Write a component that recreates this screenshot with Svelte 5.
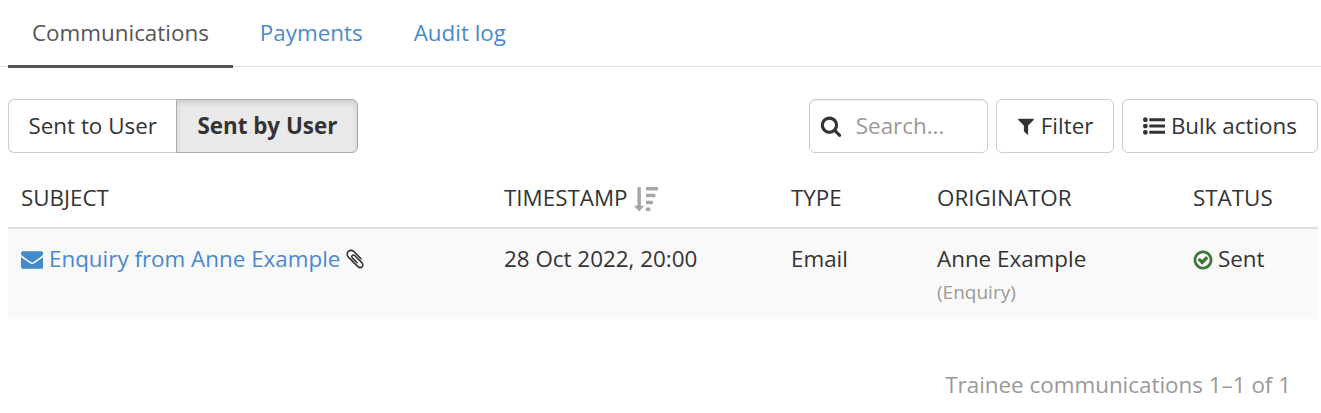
<script>
  const tabs = ['Communications', 'Payments', 'Audit log'];
  const columns = [
    { label: 'SUBJECT', width: 483 },
    { label: 'TIMESTAMP', width: 287, sorted: true },
    { label: 'TYPE', width: 146 },
    { label: 'ORIGINATOR', width: 256 },
    { label: 'STATUS', width: 138 }
  ];
</script>

<div class="page">
  <ul class="tabs">
    {#each tabs as tab, i}
      <li class:active={i === 0}>{tab}</li>
    {/each}
  </ul>

  <div class="content">
    <div class="toolbar">
      <div class="toggle">
        <button>Sent to User</button>
        <button class="on">Sent by User</button>
      </div>
      <div class="actions">
        <div class="search">
          <svg class="search-icon" viewBox="0 0 1792 1792"><path d="M1216 832q0-185-131.500-316.500t-316.500-131.500-316.500 131.500-131.500 316.500 131.500 316.500 316.500 131.500 316.500-131.500 131.500-316.500zm512 832q0 52-38 90t-90 38q-54 0-90-38l-343-342q-179 124-399 124-143 0-273.500-55.500t-225-150-150-225-55.500-273.500 55.500-273.500 150-225 225-150 273.500-55.500 273.500 55.500 225 150 150 225 55.500 273.500q0 220-124 399l343 343q37 37 37 90z"/></svg>
          <span>Search...</span>
        </div>
        <button class="filter">
          <svg viewBox="0 0 1792 1792"><path d="M1595 295q17 41-14 70l-493 493v742q0 42-39 59-13 5-25 5-27 0-45-19l-256-256q-19-19-19-45v-486l-493-493q-31-29-14-70 17-39 59-39h1280q42 0 59 39z"/></svg>Filter
        </button>
        <button class="bulk">
          <svg viewBox="0 0 1792 1792"><path d="M384 1408q0 80-56 136t-136 56-136-56-56-136 56-136 136-56 136 56 56 136zm0-512q0 80-56 136t-136 56-136-56-56-136 56-136 136-56 136 56 56 136zm1408 416v192q0 13-9.500 22.500t-22.500 9.500h-1216q-13 0-22.500-9.500t-9.500-22.500v-192q0-13 9.500-22.500t22.500-9.500h1216q13 0 22.500 9.500t9.500 22.500zm-1408-928q0 80-56 136t-136 56-136-56-56-136 56-136 136-56 136 56 56 136zm1408 416v192q0 13-9.500 22.500t-22.500 9.500h-1216q-13 0-22.500-9.500t-9.500-22.500v-192q0-13 9.500-22.500t22.500-9.500h1216q13 0 22.500 9.500t9.500 22.500zm0-512v192q0 13-9.500 22.500t-22.500 9.500h-1216q-13 0-22.500-9.500t-9.500-22.500v-192q0-13 9.500-22.500t22.500-9.500h1216q13 0 22.500 9.500t9.500 22.500z"/></svg>Bulk actions
        </button>
      </div>
    </div>

    <table>
      <thead>
        <tr>
          {#each columns as col}
            <th style="width: {col.width}px">
              {col.label}
              {#if col.sorted}
                <svg class="sort" viewBox="0 0 1792 1792"><path d="M1216 1568v192q0 14-9 23t-23 9h-256q-14 0-23-9t-9-23v-192q0-14 9-23t23-9h256q14 0 23 9t9 23zm-480-128q0 12-10 24l-319 319q-10 9-23 9-12 0-23-9l-320-320q-15-16-7-35 8-20 30-20h192v-1376q0-14 9-23t23-9h192q14 0 23 9t9 23v1376h192q14 0 23 9t9 23zm672-384v192q0 14-9 23t-23 9h-448q-14 0-23-9t-9-23v-192q0-14 9-23t23-9h448q14 0 23 9t9 23zm192-512v192q0 14-9 23t-23 9h-640q-14 0-23-9t-9-23v-192q0-14 9-23t23-9h640q14 0 23 9t9 23zm192-512v192q0 14-9 23t-23 9h-832q-14 0-23-9t-9-23v-192q0-14 9-23t23-9h832q14 0 23 9t9 23z"/></svg>
              {/if}
            </th>
          {/each}
        </tr>
      </thead>
      <tbody>
        <tr>
          <td>
            <svg class="mail" viewBox="0 0 1792 1792"><path d="M1792 710v794q0 66-47 113t-113 47h-1472q-66 0-113-47t-47-113v-794q44 49 101 87 362 246 497 345 57 42 92.500 65.500t94.500 48 110 24.500h2q51 0 110-24.500t94.500-48 92.500-65.500q170-123 498-345 57-39 100-87zm0-294q0 79-49 151t-122 123q-376 261-468 325-10 7-42.500 30.500t-54 38-52 32.500-57.500 27-50 9h-2q-23 0-50-9t-57.500-27-52-32.500-54-38-42.500-30.500q-91-64-262-182.500t-205-142.500q-62-42-117-115.500t-55-136.500q0-78 41.500-130t118.500-52h1472q65 0 112.500 47t47.500 113z"/></svg><span class="link">Enquiry from Anne Example</span><svg class="clip" viewBox="0 0 1792 1792"><path d="M1596 1385q0 117-79 196t-196 79q-135 0-235-100l-777-776q-113-115-113-271 0-159 110-270t269-111q158 0 273 113l605 606q10 10 10 22 0 16-30.500 46.500t-46.500 30.500q-13 0-23-10l-606-607q-79-77-181-77-106 0-179 75t-73 181q0 105 76 181l776 777q63 63 145 63 64 0 106-42t42-106q0-82-63-145l-581-581q-26-24-60-24-29 0-48 19t-19 48q0 32 25 59l410 410q10 10 10 22 0 16-31 47t-47 31q-12 0-22-10l-410-410q-63-61-63-149 0-82 57-139t139-57q88 0 149 63l581 581q100 98 100 235z"/></svg>
          </td>
          <td>28 Oct 2022, 20:00</td>
          <td>Email</td>
          <td>
            Anne Example
            <small>(Enquiry)</small>
          </td>
          <td>
            <svg class="ok" viewBox="0 0 1792 1792"><path d="M1299 813l-422 422q-19 19-45 19t-45-19l-294-294q-19-19-19-45t19-45l102-102q19-19 45-19t45 19l147 147 275-275q19-19 45-19t45 19l102 102q19 19 19 45t-19 45zm141 83q0-148-73-273t-198-198-273-73-273 73-198 198-73 273 73 273 198 198 273 73 273-73 198-198 73-273zm224 0q0 209-103 385.500t-279.500 279.500-385.500 103-385.500-103-279.500-279.500-103-385.500 103-385.500 279.500-279.500 385.500-103 385.500 103 279.500 279.500 103 385.500z"/></svg>Sent
          </td>
        </tr>
      </tbody>
    </table>

    <p class="count">Trainee communications 1–1 of 1</p>
  </div>
</div>

<style>
  :global(body) {
    background: #fff;
  }

  .page {
    font-family: "Open Sans", sans-serif;
    font-size: 22.4px;
    line-height: 32px;
    color: #333;
  }

  .tabs {
    display: flex;
    list-style: none;
    margin: 0;
    padding: 0 0 0 8px;
    height: 67px;
    box-sizing: border-box;
    border-bottom: 1px solid #ddd;
  }

  .tabs li {
    height: 68px;
    box-sizing: border-box;
    padding: 17px 24px 0;
    color: #4a89cc;
  }

  .tabs li + li {
    margin-left: 3px;
  }

  .tabs li.active {
    color: #555;
    border-bottom: 3px solid #555;
  }

  .content {
    padding: 0 3px 0 8px;
  }

  .toolbar {
    display: flex;
    justify-content: space-between;
    margin-top: 32px;
  }

  button {
    font: inherit;
    color: inherit;
    background: #fff;
    border: 1px solid #ccc;
    border-radius: 6px;
    height: 54px;
    padding: 0 20px;
    box-sizing: border-box;
  }

  button svg {
    width: 22px;
    height: 22px;
    fill: #333;
    vertical-align: -3px;
    margin-right: 6px;
  }

  button.filter {
    padding-right: 19.5px;
  }

  .filter svg {
    width: 20px;
    height: 20px;
    vertical-align: -2px;
    margin-left: -1px;
    margin-right: 5px;
  }

  .toggle {
    display: flex;
  }

  .toggle button:first-child {
    padding: 0 19.5px;
    border-radius: 6px 0 0 6px;
    border-right: 0;
  }

  .toggle .on {
    border-radius: 0 6px 6px 0;
    background: #e9e9e9;
    border-color: #adadad;
    font-weight: 700;
    box-shadow: inset 0 3px 5px rgba(0, 0, 0, 0.125);
  }

  .actions {
    display: flex;
    gap: 8px;
  }

  .search {
    display: flex;
    align-items: center;
    width: 179px;
    height: 54px;
    box-sizing: border-box;
    padding-left: 10px;
    border: 1px solid #ccc;
    border-radius: 6px;
    box-shadow: inset 0 1px 1px rgba(0, 0, 0, 0.075);
    color: #999;
  }

  .search-icon {
    width: 22px;
    height: 22px;
    fill: #333;
    margin-right: 14px;
  }

  table {
    border-collapse: separate;
    border-spacing: 0;
    table-layout: fixed;
    width: 1310px;
    margin-top: 21px;
  }

  th {
    box-sizing: border-box;
    font-weight: 400;
    text-align: left;
    padding: 8px 13px 13px;
    border-bottom: 2px solid #ddd;
  }

  td {
    height: 90px;
    box-sizing: border-box;
    vertical-align: top;
    padding: 14px 13px 0;
    background: #f9f9f9;
  }

  .sort {
    width: 24px;
    height: 24px;
    fill: #a6a6a6;
    vertical-align: -5px;
    margin-left: 1px;
  }

  .link {
    color: #4a89cc;
  }

  .mail {
    width: 22.4px;
    height: 22.4px;
    fill: #428bca;
    vertical-align: -3px;
    margin-right: 5.6px;
  }

  .clip {
    width: 22px;
    height: 22px;
    fill: #333;
    vertical-align: -3px;
    margin-left: 4px;
  }

  .ok {
    width: 22px;
    height: 22px;
    fill: #3c763d;
    vertical-align: -4px;
    margin-right: 4px;
    margin-left: -1px;
  }

  small {
    display: block;
    font-size: 19px;
    line-height: 24px;
    margin-top: 5px;
    color: #999;
  }

  .count {
    margin: 50px 27px 0 0;
    text-align: right;
    color: #999;
  }
</style>
